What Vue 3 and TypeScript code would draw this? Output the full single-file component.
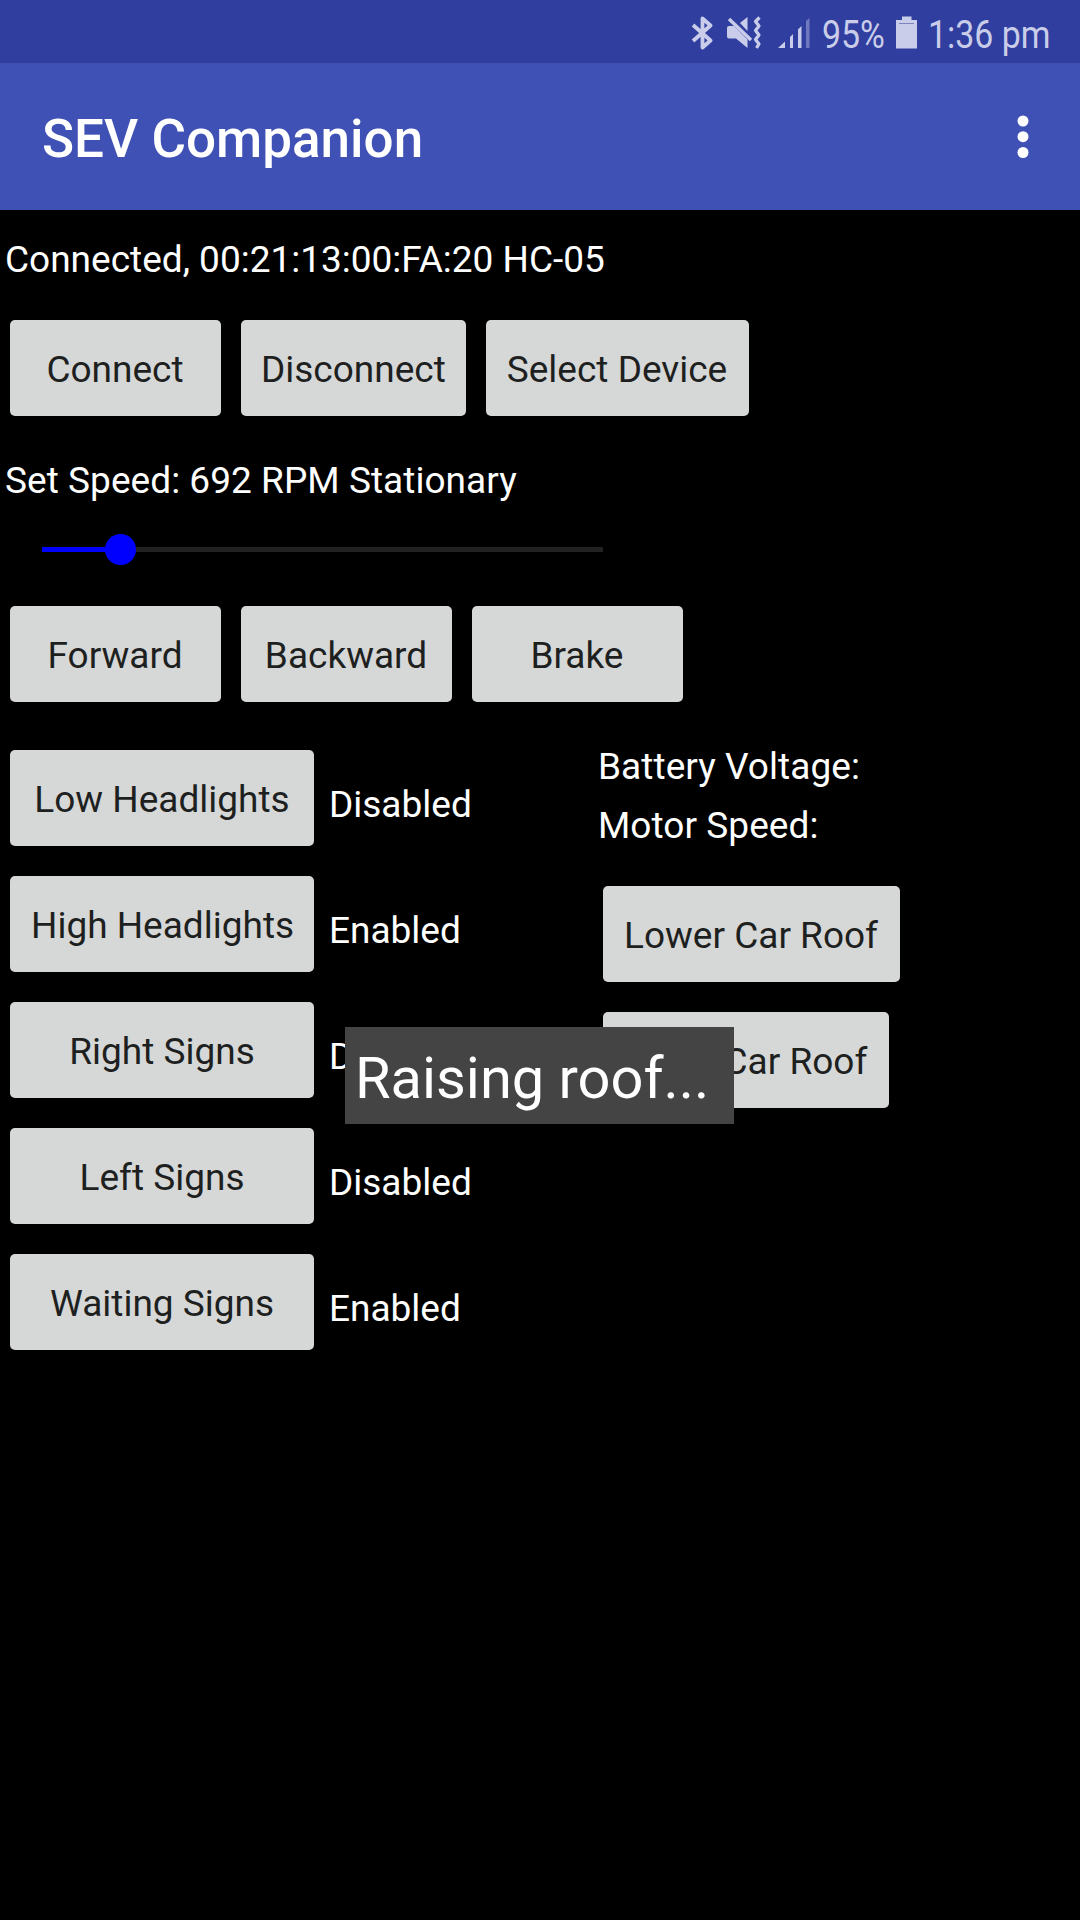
<script setup lang="ts">
interface Light {
  label: string
  state: string
}

const links: string[] = ['Connect', 'Disconnect', 'Select Device']
const drive: string[] = ['Forward', 'Backward', 'Brake']
const lights: Light[] = [
  { label: 'Low Headlights', state: 'Disabled' },
  { label: 'High Headlights', state: 'Enabled' },
  { label: 'Right Signs', state: 'Disabled' },
  { label: 'Left Signs', state: 'Disabled' },
  { label: 'Waiting Signs', state: 'Enabled' },
]
const speedPercent = 13.9
</script>

<template>
  <div class="screen">
    <div class="status">
      <svg class="bluetooth" width="22" height="34" viewBox="0 0 22 34">
        <path d="M2 9 L19.500 24.500 L11.500 31.500 V2.500 L19.500 9.500 L2 25" fill="none" stroke="#cacde9" stroke-width="3.800" stroke-linejoin="round" />
      </svg>
      <svg class="mute" width="36" height="34" viewBox="0 0 36 34">
        <path d="M0 12 Q0 10 2 10 H7 L20.500 23.500 V32 L9 22.500 H2 Q0 22.500 0 20.500 Z" fill="#cacde9" />
        <path d="M13 7 L20.500 1 V15 Z" fill="#cacde9" />
        <path d="M2 3 L24 24" stroke="#cacde9" stroke-width="3.400" fill="none" />
        <path d="M32.500 1.500 L28.500 5.500 L32 10 L28.500 14.500 L32 19 L28.500 23.500 L32 28 L29.500 32" stroke="#cacde9" stroke-width="3.200" fill="none" stroke-linejoin="round" />
      </svg>
      <svg class="signal" width="33" height="32" viewBox="0 0 33 32">
        <path d="M0 31 L7 24.500 V31 Z M12 20 L15 17 V31 H12 Z M20 12.500 L23.500 9 V31 H20 Z" fill="#cacde9" />
        <path d="M28 4 L31.500 1 V31 H28 Z" fill="#6f79bd" />
      </svg>
      <span class="percent"><span class="condensed">95%</span></span>
      <svg class="battery" width="22" height="33" viewBox="0 0 22 33">
        <path d="M6 0.500 H15.500 V4 H21 V32.500 H0 V4 H6 Z" fill="#cacde9" />
        <path d="M3 7.500 H18" stroke="#7d84bd" stroke-width="1" />
      </svg>
      <span class="time"><span class="condensed">1:36 pm</span></span>
    </div>

    <header class="bar">
      <h1>SEV Companion</h1>
      <svg width="12" height="44" viewBox="0 0 12 44">
        <circle cx="6" cy="6" r="5.500" fill="#fff" />
        <circle cx="6" cy="21.700" r="5.500" fill="#fff" />
        <circle cx="6" cy="37.500" r="5.500" fill="#fff" />
      </svg>
    </header>

    <main>
      <p class="text connection">Connected, 00:21:13:00:FA:20 HC-05</p>
      <div class="row">
        <button v-for="name in links" :key="name">{{ name }}</button>
      </div>
      <p class="text speed">Set Speed: 692 RPM Stationary</p>
      <div class="slider">
        <div class="fill" :style="{ width: speedPercent + '%' }"></div>
        <div class="thumb" :style="{ left: speedPercent + '%' }"></div>
      </div>
      <div class="row drive">
        <button v-for="name in drive" :key="name">{{ name }}</button>
      </div>
      <div class="columns">
        <div class="lights">
          <div v-for="light in lights" :key="light.label" class="light">
            <button>{{ light.label }}</button>
            <span class="text">{{ light.state }}</span>
          </div>
        </div>
        <div class="info">
          <p class="text">Battery Voltage:</p>
          <p class="text">Motor Speed:</p>
          <button class="lower">Lower Car Roof</button>
          <button class="raise">Raise Car Roof</button>
        </div>
      </div>
    </main>

    <div class="toast">Raising roof...</div>
  </div>
</template>

<style>
body {
  background: #000;
}
</style>

<style scoped>
.screen {
  position: relative;
  width: 1080px;
  height: 1920px;
  overflow: hidden;
  background: #000;
  color: #fff;
  font-family: Roboto, sans-serif;
}
.screen * {
  box-sizing: border-box;
}
.status {
  display: flex;
  align-items: flex-start;
  height: 63px;
  padding-left: 691px;
  background: #303f9f;
  color: #cacde9;
  font-size: 38.5px;
  line-height: 44px;
  white-space: nowrap;
}
.status svg {
  flex: none;
  display: block;
}
.bluetooth {
  margin-top: 16px;
}
.mute {
  margin: 16px 0 0 14px;
}
.signal {
  margin: 17px 0 0 15px;
}
.percent {
  width: 61px;
  margin: 13px 0 0 11px;
}
.battery {
  margin: 16px 0 0 13px;
}
.time {
  margin: 13px 0 0 10px;
}
.condensed {
  display: inline-block;
  transform: scaleX(0.88);
  transform-origin: 0 0;
}
.bar {
  display: flex;
  justify-content: space-between;
  height: 147px;
  padding: 0 51.5px 0 42px;
  background: #3f51b5;
}
h1 {
  margin: 45px 0 0;
  font-size: 53px;
  font-weight: 500;
  line-height: 62px;
}
.bar svg {
  margin-top: 52px;
}
p {
  margin: 0;
}
.text {
  font-size: 37px;
  line-height: 44px;
  white-space: nowrap;
}
.connection {
  padding: 28px 0 0 5px;
}
.row {
  display: flex;
  gap: 20px;
  padding-left: 10px;
  margin-top: 38px;
}
button {
  display: block;
  min-width: 211px;
  height: 96px;
  padding: 4px 21px 0 20px;
  border: 0;
  border-radius: 5px;
  background: #d6d8d7;
  color: #1e1f1f;
  font-family: inherit;
  font-size: 37px;
  line-height: 44px;
  white-space: nowrap;
}
.row button:nth-child(2) {
  width: 225px;
}
.row button:nth-child(3) {
  width: 263px;
}
.row.drive button {
  width: 211px;
}
.speed {
  padding: 43px 0 0 5px;
  letter-spacing: 0.045px;
}
.slider {
  position: relative;
  width: 561px;
  height: 5px;
  margin: 44px 0 0 42px;
  background: #222;
}
.fill {
  height: 5px;
  background: #00f;
}
.thumb {
  position: absolute;
  top: -13px;
  width: 31px;
  height: 31px;
  margin-left: -15px;
  border-radius: 50%;
  background: #00f;
}
.row.drive {
  margin-top: 54px;
}
.columns {
  display: flex;
  margin-top: 42px;
}
.lights {
  display: flex;
  flex-direction: column;
  gap: 30px;
  width: 598px;
  padding: 6px 0 0 10px;
}
.light {
  display: flex;
  gap: 15px;
}
.light button {
  width: 304px;
  padding-left: 21px;
}
.light .text {
  margin-top: 33px;
}
.info {
  padding-top: 1px;
}
.info .text {
  letter-spacing: 0.06px;
}
.info .text:nth-child(2) {
  margin-top: 15px;
}
.lower {
  width: 297px;
  margin: 38px 0 30px 5px;
}
.raise {
  width: 286px;
  margin-left: 5px;
}
.toast {
  position: absolute;
  left: 345px;
  top: 1027px;
  width: 389px;
  height: 97px;
  padding: 17px 0 0 10px;
  background: #444;
  font-size: 57.75px;
  line-height: 68px;
  white-space: nowrap;
}
</style>
